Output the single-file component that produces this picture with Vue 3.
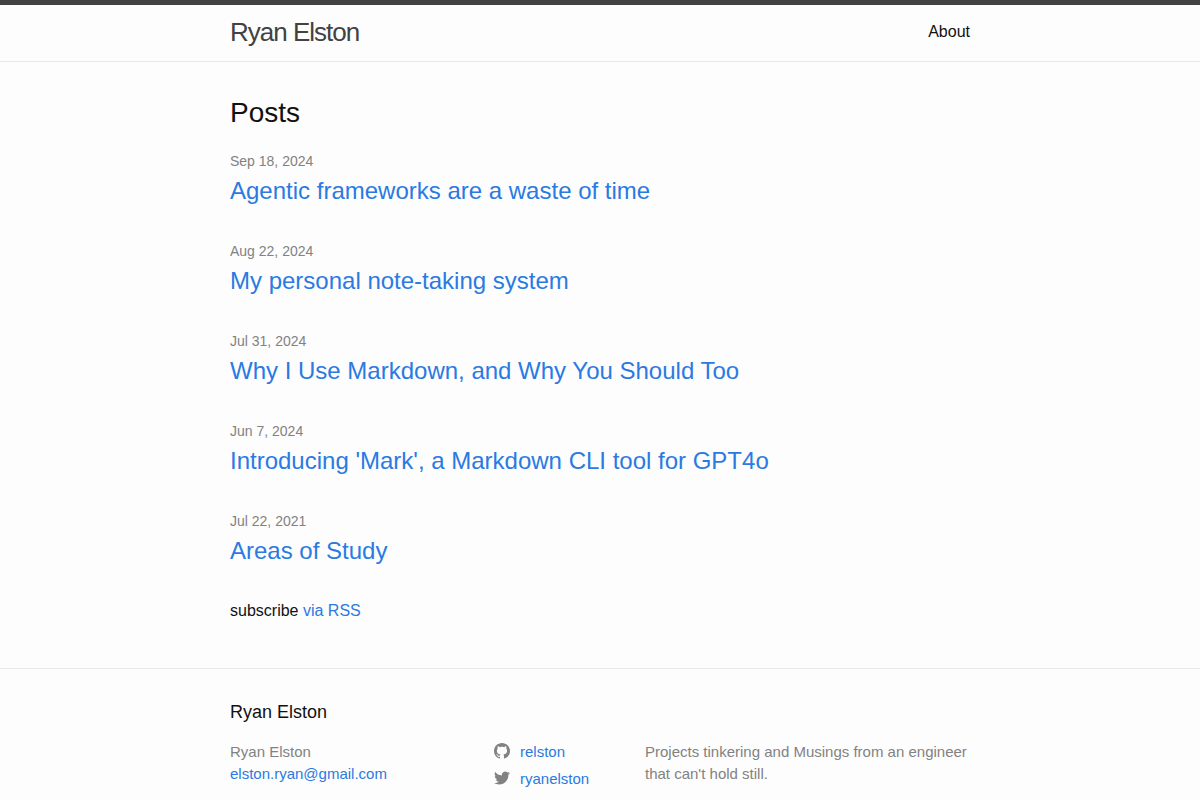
<script setup>
const posts = [
  { date: 'Sep 18, 2024', title: 'Agentic frameworks are a waste of time' },
  { date: 'Aug 22, 2024', title: 'My personal note-taking system' },
  { date: 'Jul 31, 2024', title: 'Why I Use Markdown, and Why You Should Too' },
  { date: 'Jun 7, 2024', title: "Introducing 'Mark', a Markdown CLI tool for GPT4o" },
  { date: 'Jul 22, 2021', title: 'Areas of Study' }
]
</script>

<template>
  <div class="page">
    <header class="site-header">
      <div class="wrapper header-row">
        <a class="site-title" href="#">Ryan Elston</a>
        <nav><a class="page-link" href="#">About</a></nav>
      </div>
    </header>

    <main class="content">
      <div class="wrapper">
        <h2 class="list-heading">Posts</h2>
        <ul class="post-list">
          <li v-for="post in posts" :key="post.title">
            <span class="post-meta">{{ post.date }}</span>
            <h3 class="post-title"><a href="#">{{ post.title }}</a></h3>
          </li>
        </ul>
        <p class="subscribe">subscribe <a href="#">via RSS</a></p>
      </div>
    </main>

    <footer class="site-footer">
      <div class="wrapper">
        <h2 class="footer-heading">Ryan Elston</h2>
        <div class="footer-cols">
          <ul class="contact">
            <li>Ryan Elston</li>
            <li><a href="#">elston.ryan@gmail.com</a></li>
          </ul>
          <ul class="social">
            <li>
              <a href="#">
                <svg class="icon" viewBox="0 0 16 16" aria-hidden="true"><path d="M8 0C3.58 0 0 3.582 0 8c0 3.535 2.292 6.533 5.47 7.59.4.075.547-.172.547-.385 0-.19-.007-.693-.01-1.36-2.226.483-2.695-1.073-2.695-1.073-.364-.924-.89-1.17-.89-1.17-.725-.496.056-.486.056-.486.803.056 1.225.824 1.225.824.714 1.223 1.873.87 2.33.665.072-.517.278-.87.507-1.07-1.777-.2-3.644-.888-3.644-3.953 0-.873.31-1.587.823-2.147-.083-.202-.358-1.015.077-2.117 0 0 .672-.215 2.2.82.638-.178 1.323-.266 2.003-.27.68.004 1.364.092 2.003.27 1.527-1.035 2.198-.82 2.198-.82.437 1.102.163 1.915.08 2.117.513.56.823 1.274.823 2.147 0 3.073-1.87 3.75-3.653 3.947.287.246.543.735.543 1.48 0 1.07-.01 1.933-.01 2.195 0 .215.144.463.55.385C13.71 14.53 16 11.534 16 8c0-4.418-3.582-8-8-8" /></svg>
                <span>relston</span>
              </a>
            </li>
            <li>
              <a href="#">
                <svg class="icon" viewBox="0 0 16 16" aria-hidden="true"><path d="M16 3.038a6.62 6.62 0 0 1-1.885.517 3.299 3.299 0 0 0 1.443-1.816c-.634.37-1.337.64-2.085.79a3.282 3.282 0 0 0-5.593 2.994c-2.728-.137-5.147-1.444-6.766-3.43a3.237 3.237 0 0 0-.444 1.65c0 1.14.58 2.143 1.46 2.732a3.278 3.278 0 0 1-1.486-.41v.04a3.285 3.285 0 0 0 2.633 3.218 3.203 3.203 0 0 1-.865.115 3.23 3.23 0 0 1-.618-.057 3.283 3.283 0 0 0 3.066 2.277A6.587 6.587 0 0 1 0 13.018a9.288 9.288 0 0 0 5.032 1.474c6.038 0 9.34-5 9.34-9.338 0-.143-.004-.284-.01-.425A6.67 6.67 0 0 0 16 3.038z" /></svg>
                <span>ryanelston</span>
              </a>
            </li>
          </ul>
          <p class="about">Projects tinkering and Musings from an engineer that can't hold still.</p>
        </div>
      </div>
    </footer>
  </div>
</template>

<style>
body {
  margin: 0;
  background: #fdfdfd;
}
</style>

<style scoped>
.page {
  min-height: 100vh;
  color: #111;
  font: 16px/24px "Liberation Sans", Arial, sans-serif;
}
.wrapper {
  max-width: 740px;
  margin: 0 auto;
  padding: 0 30px;
}
a {
  color: #2a7ae2;
  text-decoration: none;
}
a:hover {
  color: #111;
  text-decoration: underline;
}
h2,
h3,
p,
ul {
  margin: 0;
  padding: 0;
  font-weight: 400;
}
ul {
  list-style: none;
}
.site-header {
  border-top: 5px solid #424242;
  border-bottom: 1px solid #e8e8e8;
}
.header-row {
  display: flex;
  justify-content: space-between;
  line-height: 54px;
  min-height: 56px;
}
.site-title {
  font-size: 26px;
  letter-spacing: -1px;
  color: #424242;
}
.page-link {
  color: #111;
}
.content {
  padding: 30px 0;
}
.list-heading {
  font-size: 28px;
  line-height: 42px;
  margin-bottom: 15px;
}
.post-list li {
  margin-bottom: 30px;
}
.post-meta {
  display: block;
  font-size: 14px;
  line-height: 24px;
  color: #828282;
}
.post-title {
  font-size: 24px;
  line-height: 36px;
}
.subscribe {
  margin-bottom: 15px;
}
.site-footer {
  border-top: 1px solid #e8e8e8;
  padding: 30px 0;
}
.footer-heading {
  font-size: 18px;
  line-height: 27px;
  margin-bottom: 15px;
}
.footer-cols {
  display: grid;
  grid-template-columns: 264px 151px 1fr;
  font-size: 15px;
  line-height: 22px;
  color: #828282;
}
.social li {
  margin-bottom: 5px;
}
.social a {
  display: flex;
  gap: 10px;
}
.icon {
  width: 16px;
  height: 16px;
  margin-top: 2px;
  fill: #828282;
}
@media (max-width: 700px) {
  .footer-cols {
    grid-template-columns: 1fr;
    gap: 15px;
  }
}
</style>
